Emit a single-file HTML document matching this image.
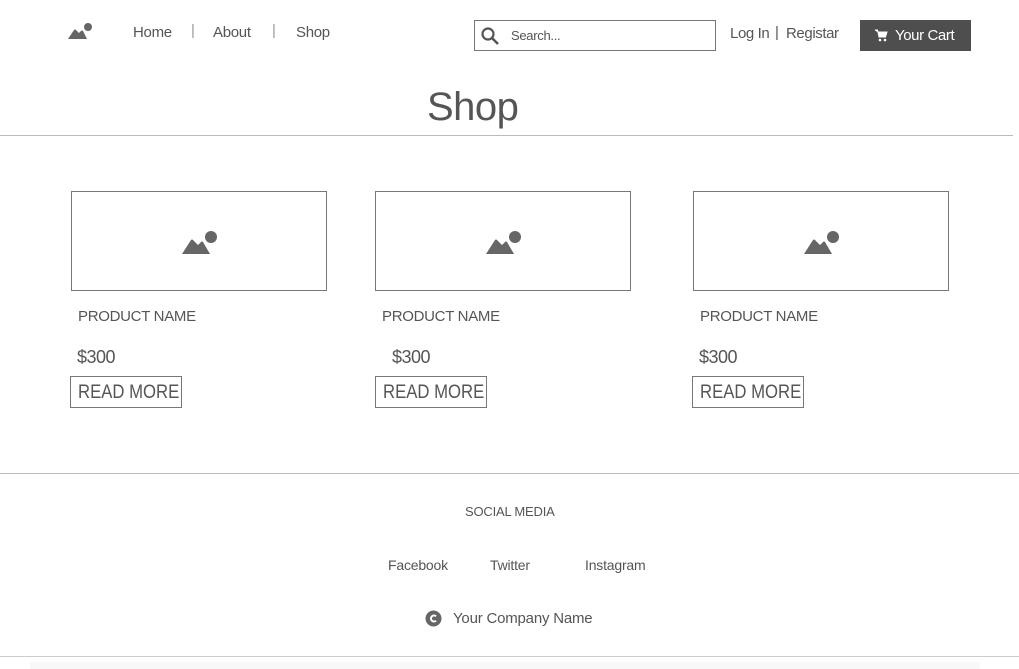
<!DOCTYPE html>
<html><head><style>
body{margin:0;width:1019px;height:669px;background:#fff;font-family:"Liberation Sans",sans-serif;color:#555;position:relative;overflow:hidden}
.a{position:absolute;white-space:nowrap}
.box{position:absolute;border:1px solid #777;box-sizing:border-box}
.pn{font-size:15px;color:#555;letter-spacing:-0.3px}
.pr{font-size:18px;color:#555;letter-spacing:-0.5px}
.rm{position:absolute;white-space:nowrap;border:1px solid #777;box-sizing:border-box;width:112px;height:32px;font-size:19px;line-height:32px;padding-left:7px;color:#555;overflow:hidden}
.rm span{display:inline-block;transform:scaleX(0.88);transform-origin:left center}
.hr{position:absolute;height:1px;background:#bbb}
</style></head><body>
<svg class="a" style="left:67px;top:22px" width="26" height="18" viewBox="0 0 26 18"><path d="M1 17 L7 8 Q8 7 9 8 L12 11 L14 9 Q15 8 16 9 L20 17 Z" fill="#666"/><circle cx="21" cy="5" r="4" fill="#666"/></svg>
<div class="a" style="left:133px;top:24px;font-size:15px;letter-spacing:-0.3px">Home</div>
<div class="a" style="left:191px;top:22px;font-size:15px;color:#999">|</div>
<div class="a" style="left:213px;top:24px;font-size:15px;letter-spacing:-0.3px">About</div>
<div class="a" style="left:272px;top:22px;font-size:15px;color:#999">|</div>
<div class="a" style="left:296px;top:24px;font-size:15px;letter-spacing:-0.3px">Shop</div>
<div class="box" style="left:474px;top:20px;width:242px;height:31px"></div>
<svg class="a" style="left:480px;top:26px" width="20" height="20" viewBox="0 0 20 20"><circle cx="8" cy="8" r="5.5" fill="none" stroke="#555" stroke-width="2.2"/><path d="M12 12 L18 18" stroke="#555" stroke-width="2.6"/></svg>
<div class="a" style="left:511px;top:28px;font-size:13px;color:#555;letter-spacing:-0.3px">Search...</div>
<div class="a" style="left:730px;top:25px;font-size:15px;letter-spacing:-0.4px">Log In</div>
<div class="a" style="left:775px;top:24px;font-size:15px">|</div>
<div class="a" style="left:786px;top:25px;font-size:15px;letter-spacing:-0.4px">Registar</div>
<div class="a" style="left:860px;top:20px;width:111px;height:31px;background:#4e4e4e;color:#fff;font-size:15px;line-height:31px">
<svg style="position:absolute;left:15px;top:9px" width="13" height="13" viewBox="0 0 13 13"><path d="M0 1h2.5l1.5 7h6.5l1.5-5H3.5z" fill="#fff" stroke="#fff" stroke-width="1"/><circle cx="5" cy="11" r="1.3" fill="#fff"/><circle cx="10" cy="11" r="1.3" fill="#fff"/></svg>
<span style="position:absolute;left:35px;letter-spacing:-0.4px">Your Cart</span></div>
<div class="a" style="left:427px;top:85px;font-size:40px;color:#555;letter-spacing:-0.5px">Shop</div>
<div class="hr" style="left:0;top:135px;width:1013px"></div>

<div class="box" style="left:71px;top:191px;width:256px;height:100px"></div>
<div class="box" style="left:375px;top:191px;width:256px;height:100px"></div>
<div class="box" style="left:693px;top:191px;width:256px;height:100px"></div>
<svg class="a" style="left:181px;top:229px" width="38" height="26" viewBox="0 0 38 26"><path d="M1 25 L10 11 Q11 10 12 11 L17 16 L20 13 Q21 12 22 13 L29 25 Z" fill="#666"/><circle cx="30" cy="8" r="6" fill="#666"/></svg>
<svg class="a" style="left:485px;top:229px" width="38" height="26" viewBox="0 0 38 26"><path d="M1 25 L10 11 Q11 10 12 11 L17 16 L20 13 Q21 12 22 13 L29 25 Z" fill="#666"/><circle cx="30" cy="8" r="6" fill="#666"/></svg>
<svg class="a" style="left:803px;top:229px" width="38" height="26" viewBox="0 0 38 26"><path d="M1 25 L10 11 Q11 10 12 11 L17 16 L20 13 Q21 12 22 13 L29 25 Z" fill="#666"/><circle cx="30" cy="8" r="6" fill="#666"/></svg>
<div class="a pn" style="left:78px;top:308px">PRODUCT NAME</div>
<div class="a pn" style="left:382px;top:308px">PRODUCT NAME</div>
<div class="a pn" style="left:700px;top:308px">PRODUCT NAME</div>
<div class="a pr" style="left:77px;top:347px">$300</div>
<div class="a pr" style="left:392px;top:347px">$300</div>
<div class="a pr" style="left:699px;top:347px">$300</div>
<div class="rm" style="left:70px;top:376px"><span>READ MORE</span></div>
<div class="rm" style="left:375px;top:376px"><span>READ MORE</span></div>
<div class="rm" style="left:692px;top:376px"><span>READ MORE</span></div>

<div class="hr" style="left:0;top:473px;width:1019px"></div>
<div class="a" style="left:465px;top:504px;font-size:13px;letter-spacing:-0.2px">SOCIAL MEDIA</div>
<div class="a" style="left:388px;top:557px;font-size:14px;letter-spacing:-0.2px">Facebook</div>
<div class="a" style="left:490px;top:557px;font-size:14px;letter-spacing:-0.2px">Twitter</div>
<div class="a" style="left:585px;top:557px;font-size:14px;letter-spacing:-0.2px">Instagram</div>
<svg class="a" style="left:425px;top:610px" width="17" height="17" viewBox="0 0 17 17"><circle cx="8.5" cy="8.5" r="8" fill="#666"/><path d="M11 6.3A3 3 0 1 0 11 10.7" fill="none" stroke="#fff" stroke-width="2"/></svg>
<div class="a" style="left:453px;top:610px;font-size:15px;letter-spacing:-0.2px">Your Company Name</div>
<div class="hr" style="left:0;top:656px;width:1019px;background:#ccc"></div>
<div class="a" style="left:30px;top:662px;width:950px;height:7px;background:#f8f8f8"></div>
</body></html>
